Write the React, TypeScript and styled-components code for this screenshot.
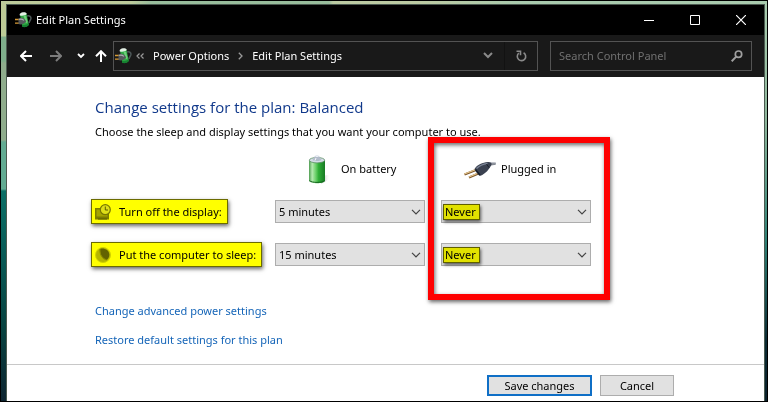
import React from 'react';
import styled, { createGlobalStyle, css } from 'styled-components';

const GlobalStyle = createGlobalStyle`
  *, *::before, *::after { box-sizing: border-box; }
  body { margin: 0; }
  body, button, input, select {
    font-family: "Noto Sans", "Open Sans", sans-serif;
    font-size: 11px;
    line-height: 16px;
  }
`;

const Desktop = styled.div`
  display: flex;
  min-height: 100vh;
  padding: 3px 2px 0 5px;
  border: 1px solid #000;
  background:
    linear-gradient(90deg, #bccb9b 0 130px, #98bd9c 150px 328px, #bccba3 332px 420px, #a9cbae 520px) top / 100% 3px no-repeat,
    linear-gradient(#bccb97 0 35px, #7fae8b 36px 60px, #8fac8c 62px 139px, #62ab92 141px 188px, #0b6f66 190px, #085a56 255px, #07413f 330px, #0d2431) left / 5px 100% no-repeat,
    linear-gradient(#a9cbae, #8db69b 30%, #2d7f74 60%, #0b2a33 85%, #0b222c) right / 2px 100% no-repeat;
`;

const Window = styled.div`
  flex: 1;
  min-width: 0;
  display: flex;
  flex-direction: column;
  border: solid #4b5a50;
  border-width: 1px 1px 0;
  background: #fff;
`;

const TitleBar = styled.header`
  display: flex;
  align-items: center;
  height: 30px;
  padding-left: 8px;
  gap: 4px;
  background: #000;
  color: #fff;
`;

const WindowTitle = styled.span`
  flex: 1;
`;

const Controls = styled.div`
  display: flex;
  align-self: stretch;
`;

const PlainButton = styled.button`
  display: flex;
  align-items: center;
  justify-content: center;
  padding: 0;
  border: 0;
  background: none;
  color: inherit;
`;

const ControlButton = styled(PlainButton)`
  width: 46px;
`;

const Toolbar = styled.nav`
  display: flex;
  align-items: center;
  height: 42px;
  padding: 0 12px 1px 4px;
  background: #191919;
  color: #fff;
`;

const NavButton = styled(PlainButton)<{ $narrow?: boolean }>`
  width: ${(p) => (p.$narrow ? '20px' : '30px')};
  height: 28px;
  color: ${(p) => (p.disabled ? '#7c7c7c' : '#fff')};
`;

const fieldBox = css`
  display: flex;
  align-items: center;
  height: 30px;
  border: 1px solid #535353;
`;

const AddressBar = styled.div`
  ${fieldBox}
  flex: 1;
  min-width: 0;
  margin: 0 12px 0 2px;
  padding-left: 1px;
`;

const Crumbs = styled.ol`
  flex: 1;
  display: flex;
  align-items: center;
  gap: 9px;
  margin: 0;
  padding: 0 0 0 4px;
  list-style: none;
  white-space: nowrap;
  color: #9a9a9a;
`;

const Crumb = styled.li`
  display: flex;
  align-items: center;
  gap: 9px;
`;

const CrumbLink = styled.a`
  color: #fff;
  text-decoration: none;
`;

const AddressButton = styled(PlainButton)`
  width: 33px;
  height: 28px;
  color: #8a8a8a;
  & + & { border-left: 1px solid #121212; }
`;

const SearchBox = styled.label`
  ${fieldBox}
  flex: 0 1 202px;
  min-width: 0;
  padding: 0 8px;
  color: #a0a0a0;
`;

const SearchInput = styled.input`
  flex: 1;
  min-width: 0;
  padding: 0;
  border: 0;
  outline: 0;
  background: none;
  color: #fff;
  &::placeholder { color: #707070; opacity: 1; }
`;

const Content = styled.main`
  flex: 1;
  padding: 20px 88px 16px;
  color: #000;
`;

const Heading = styled.h1`
  margin: 0 0 7px;
  font: 400 15px/20px "Open Sans", "Noto Sans", sans-serif;
  color: #11398b;
`;

const Intro = styled.p`
  margin: 0;
`;

const SettingsGrid = styled.form`
  display: grid;
  grid-template-columns: 180px 150px 150px;
  grid-auto-rows: 43px;
  align-items: center;
  margin: 7px 0 27px;
`;

const ColumnHead = styled.div`
  display: flex;
  align-items: center;
  gap: 5px;
  padding-left: 23px;
`;

const BatteryHead = styled(ColumnHead)`
  grid-column: 2;
`;

const PluggedGroup = styled.div`
  position: relative;
  grid-column: 3;
  grid-row: 1 / span 3;
  display: grid;
  grid-template-columns: 150px;
  grid-auto-rows: 43px;
  align-items: center;
  margin: 0 -16px 0 16px;
`;

const Callout = styled.div`
  position: absolute;
  inset: -10px -19px -24px -13px;
  border: 6px solid #fe0000;
  box-shadow: 1px 2px 4px rgba(0, 0, 0, 0.6), inset 1px 2px 4px rgba(0, 0, 0, 0.6);
  pointer-events: none;
`;

const SettingLabel = styled.label`
  grid-column: 1;
  justify-self: start;
  display: flex;
  align-items: center;
  gap: 8px;
  height: 25px;
  margin-left: -4px;
  padding: 0 5px 0 3px;
  border: 1px solid #6b6b00;
  background: #ff0;
  box-shadow: 1px 2px 4px rgba(0, 0, 0, 0.6);
  white-space: nowrap;
`;

const SelectWrap = styled.div`
  position: relative;
  display: flex;
  align-items: center;
`;

const Select = styled.select`
  width: 100%;
  height: 23px;
  padding: 0 20px 0 3px;
  border: 1px solid #adadad;
  border-radius: 0;
  background: #e1e1e1;
  color: #000;
  appearance: none;
`;

const SelectArrow = styled.svg`
  position: absolute;
  right: 4px;
  pointer-events: none;
`;

const Marker = styled.span`
  position: absolute;
  left: 2px;
  width: 37px;
  height: 16px;
  border: 1px solid #6b6b00;
  background: #ff0;
  box-shadow: 1px 2px 3px rgba(0, 0, 0, 0.6);
  mix-blend-mode: multiply;
  pointer-events: none;
`;

const Links = styled.div`
  display: flex;
  flex-direction: column;
  align-items: flex-start;
  gap: 13px;
`;

const TextLink = styled.a`
  color: #1565b8;
  text-decoration: none;
`;

const Footer = styled.footer`
  display: flex;
  justify-content: flex-end;
  gap: 8px;
  padding: 10px 90px 5px;
  border-top: 1px solid #c8c8c8;
`;

const ActionButton = styled.button<{ $primary?: boolean }>`
  width: ${(p) => (p.$primary ? '105px' : '74px')};
  height: 21px;
  padding: 0;
  border: ${(p) => (p.$primary ? '2px solid #0f6fc6' : '1px solid #adadad')};
  background: #e1e1e1;
  color: #000;
`;

const PowerIcon = () => (
  <svg width="17" height="16" viewBox="0 0 17 16" aria-hidden="true">
    <path d="M12 4c2.600-.8 4.300.6 3.800 2.900-.5 2-1.800 2.200-1.600 4.300" fill="none" stroke="#4c5657" strokeWidth="1.600" />
    <path d="M5 2.800 11.500 1.800 13.800 12.800c-1.400 2-4.800 2.800-6.600 1.800z" fill="#2fa944" />
    <path d="M8.600 4l2.400-.5 1.600 6.800-1.600 1z" fill="#6fce7a" />
    <path d="M4.600 3.200c-.3-1.700 1.600-2.600 3.400-2.900 2-.2 3.600.2 3.800 1.800-1.500 1.600-5.200 2.200-7.200 1.100z" fill="#e4f1e6" />
    <path d="M6.800 12.600c2 .7 4.900.2 6.700-1.100l.2 1.700c-1.400 2-5 2.500-6.400 1.500z" fill="#168231" />
    <path d="M0 7.500h4M0 11.200h4" stroke="#d79a35" strokeWidth="1.300" />
    <path d="M3.500 6.400c2.200-1 4.400-.6 6.500 1.300l1.200 1.700-1.700 1.600c-2.200 1.500-4.200 1.800-6 1.100z" fill="#55595c" />
    <path d="M4.200 7.500c1.700-.7 3.300-.3 4.700.9" fill="none" stroke="#aab0b3" strokeWidth="1.200" />
  </svg>
);

const ArrowLeft = () => (
  <svg width="12" height="12" viewBox="0 0 12 12" fill="none" stroke="currentColor" strokeWidth="2" aria-hidden="true">
    <path d="M12 6H1.5M6 1 1 6l5 5" />
  </svg>
);
const ArrowRight = () => (
  <svg width="12" height="12" viewBox="0 0 12 12" fill="none" stroke="currentColor" strokeWidth="2" aria-hidden="true">
    <path d="M0 6h10.5M6 1l5 5-5 5" />
  </svg>
);
const ArrowUp = () => (
  <svg width="12" height="12" viewBox="0 0 12 12" fill="none" stroke="currentColor" strokeWidth="2" aria-hidden="true">
    <path d="M6 12V1.5M1 6.200 6 1.200l5 5" />
  </svg>
);
const SmallChevron = () => (
  <svg width="8" height="6" viewBox="0 0 8 6" fill="none" stroke="currentColor" strokeWidth="1.800" aria-hidden="true">
    <path d="M1 1l3 3 3-3" />
  </svg>
);
const WideChevron = () => (
  <svg width="10" height="7" viewBox="0 0 10 7" fill="none" stroke="currentColor" strokeWidth="2" aria-hidden="true">
    <path d="M1 1l4 4 4-4" />
  </svg>
);
const CrumbBack = () => (
  <svg width="8" height="6" viewBox="0 0 8 6" fill="none" stroke="currentColor" strokeWidth="1.200" aria-hidden="true">
    <path d="M3.500 .5 1 3l2.500 2.500M7.500 .5 5 3l2.500 2.500" />
  </svg>
);
const CrumbNext = () => (
  <svg width="5" height="8" viewBox="0 0 5 8" fill="none" stroke="currentColor" strokeWidth="1.300" aria-hidden="true">
    <path d="M.8 .8 4 4 .8 7.200" />
  </svg>
);
const RefreshIcon = () => (
  <svg width="11" height="12" viewBox="0 0 11 12" fill="none" stroke="currentColor" strokeWidth="1.600" aria-hidden="true">
    <path d="M7.600 2.800a4.200 4.200 0 1 1-4.800 .4" />
    <path d="M.5 1.300h4v4" />
  </svg>
);
const SearchIcon = () => (
  <svg width="12" height="12" viewBox="0 0 12 12" fill="none" stroke="currentColor" aria-hidden="true">
    <circle cx="7.500" cy="4.200" r="3.200" strokeWidth="1.700" />
    <path d="M5.200 6.600 .7 11.200" strokeWidth="2" />
  </svg>
);

const BatteryIcon = () => (
  <svg width="38" height="32" viewBox="0 0 38 32" aria-hidden="true">
    <defs>
      <linearGradient id="cell" x1="0" x2="1">
        <stop offset="0" stopColor="#4f9d51" />
        <stop offset=".2" stopColor="#b5eab0" />
        <stop offset=".42" stopColor="#6cd16a" />
        <stop offset=".6" stopColor="#2fae37" />
        <stop offset="1" stopColor="#187a24" />
      </linearGradient>
      <linearGradient id="shade" x1="0" x2="1">
        <stop offset="0" stopColor="#777" />
        <stop offset="1" stopColor="#fff" stopOpacity="0" />
      </linearGradient>
    </defs>
    <path d="M26 23c4-2 7-1 6 1s-4 5-9 6.500z" fill="url(#shade)" opacity=".7" />
    <path d="M11 7.500v20.600c1.500 3 14.500 3 16 0V7.500z" fill="url(#cell)" />
    <path d="M11.500 27.600c2 2.400 13 2.400 15 0" fill="none" stroke="#16641f" />
    <ellipse cx="19" cy="7.200" rx="7.700" ry="2.700" fill="#d5dde6" stroke="#5e8f68" strokeWidth=".8" />
    <path d="M14.500 7c1.500-1 1.500-3 2.500-4 1-.8 3-.8 4 0 1 1 1 3 2.500 4-2 1.400-7 1.400-9 0z" fill="#b3bccb" />
    <path d="M17 3.200c1-.9 3-.9 4 0-.6 1-3.400 1-4 0z" fill="#edf1f6" />
    <path d="M18 5l-1 2.500" stroke="#f7f9fb" />
  </svg>
);

const PlugIcon = () => (
  <svg width="32" height="32" viewBox="0 0 32 32" aria-hidden="true">
    <path d="M22 11.500c3-1.800 6-2.200 10-1.800l-.5 2.300c-3-.4-5 .6-7 2z" fill="#858a94" />
    <path d="M23 11c3-1.300 5-1.500 8.500-1.200" fill="none" stroke="#c0c3ca" strokeWidth=".8" />
    <path d="M.5 21.500 12 17M5 24.500 15 20.300" stroke="#7b5528" strokeWidth="2.200" />
    <path d="M.5 21 12 16.500M5 24 15 19.800" stroke="#e8c890" strokeWidth="1.100" />
    <path d="M10.500 16c2.500-4.200 8.500-6.400 13-6.900 3-.3 4.500 .8 4 2.700-2 4.200-6 9.200-11 11-1.800 .2-4.500-3.500-6-6.800z" fill="#3a4150" />
    <path d="M12.500 15.600c3-3 6.500-4.400 11-5.200" fill="none" stroke="#7d8698" strokeWidth="1.400" />
    <path d="M11.500 16.500l4.500 5.500" stroke="#171b24" strokeWidth="1.300" />
    <path d="M22.500 11l2.500 3.500" stroke="#1c212b" />
  </svg>
);

const DisplayIcon = () => (
  <svg width="16" height="16" viewBox="0 0 16 16" aria-hidden="true">
    <path d="M0 4h14v11.500H0z" fill="#7d7d00" />
    <path d="M1.500 5.500h11v7h-11z" fill="#a4a400" />
    <path d="M3 15h9" stroke="#5c5c00" />
    <circle cx="10.300" cy="5.700" r="5" fill="#dede18" stroke="#777700" strokeWidth="1.200" />
    <path d="M10.300 2.500v3.500h2.700" fill="none" stroke="#5c5c00" />
  </svg>
);

const SleepIcon = () => (
  <svg width="16" height="16" viewBox="0 0 16 16" aria-hidden="true">
    <circle cx="8" cy="8" r="7.500" fill="#b5b500" stroke="#d2d200" />
    <path d="M5 2c4-1.500 9 1 9.300 5.500 .1 2.500-1 4.500-2.800 5.500C7 11.500 4.500 7 5 2z" fill="#626200" />
    <path d="M5 2c-.5 5 2 9.500 6.500 11" fill="none" stroke="#8c8c00" strokeWidth="1.200" />
  </svg>
);

type ChoiceProps = { id?: string; label: string; value: string; marked?: boolean };

const Choice = ({ id, label, value, marked }: ChoiceProps) => (
  <SelectWrap>
    <Select id={id} aria-label={label} defaultValue={value}>
      <option>5 minutes</option>
      <option>15 minutes</option>
      <option>Never</option>
    </Select>
    {marked && <Marker />}
    <SelectArrow width="10" height="6" viewBox="0 0 10 6" fill="none" stroke="#444" strokeWidth="1.200" aria-hidden="true">
      <path d="M1 .8l4 4 4-4" />
    </SelectArrow>
  </SelectWrap>
);

export default function App() {
  return (
    <>
      <GlobalStyle />
      <Desktop>
        <Window>
          <TitleBar>
            <PowerIcon />
            <WindowTitle>Edit Plan Settings</WindowTitle>
            <Controls>
              <ControlButton aria-label="Minimize">
                <svg width="10" height="10" viewBox="0 0 10 10" stroke="#fff"><path d="M0 5.500h10" /></svg>
              </ControlButton>
              <ControlButton aria-label="Maximize">
                <svg width="10" height="10" viewBox="0 0 10 10" fill="none" stroke="#fff"><path d="M.5 .5h9v9h-9z" /></svg>
              </ControlButton>
              <ControlButton aria-label="Close">
                <svg width="10" height="10" viewBox="0 0 10 10" stroke="#fff" strokeWidth="1.200"><path d="M0 0l10 10M10 0 0 10" /></svg>
              </ControlButton>
            </Controls>
          </TitleBar>

          <Toolbar aria-label="Navigation">
            <NavButton aria-label="Back"><ArrowLeft /></NavButton>
            <NavButton aria-label="Forward" disabled><ArrowRight /></NavButton>
            <NavButton $narrow aria-label="Recent locations"><SmallChevron /></NavButton>
            <NavButton $narrow aria-label="Up"><ArrowUp /></NavButton>
            <AddressBar>
              <PowerIcon />
              <Crumbs>
                <Crumb><CrumbBack /></Crumb>
                <Crumb><CrumbLink href="#power">Power Options</CrumbLink><CrumbNext /></Crumb>
                <Crumb><CrumbLink href="#plan">Edit Plan Settings</CrumbLink></Crumb>
              </Crumbs>
              <AddressButton aria-label="Previous locations"><WideChevron /></AddressButton>
              <AddressButton aria-label="Refresh"><RefreshIcon /></AddressButton>
            </AddressBar>
            <SearchBox>
              <SearchInput type="search" placeholder="Search Control Panel" aria-label="Search Control Panel" />
              <SearchIcon />
            </SearchBox>
          </Toolbar>

          <Content>
            <Heading>Change settings for the plan: Balanced</Heading>
            <Intro>Choose the sleep and display settings that you want your computer to use.</Intro>
            <SettingsGrid>
              <BatteryHead><BatteryIcon />On battery</BatteryHead>
              <SettingLabel htmlFor="display"><DisplayIcon />Turn off the display:</SettingLabel>
              <Choice id="display" label="Turn off the display, on battery" value="5 minutes" />
              <SettingLabel htmlFor="sleep"><SleepIcon />Put the computer to sleep:</SettingLabel>
              <Choice id="sleep" label="Put the computer to sleep, on battery" value="15 minutes" />
              <PluggedGroup>
                <ColumnHead><PlugIcon />Plugged in</ColumnHead>
                <Choice label="Turn off the display, plugged in" value="Never" marked />
                <Choice label="Put the computer to sleep, plugged in" value="Never" marked />
                <Callout />
              </PluggedGroup>
            </SettingsGrid>
            <Links>
              <TextLink href="#advanced">Change advanced power settings</TextLink>
              <TextLink href="#restore">Restore default settings for this plan</TextLink>
            </Links>
          </Content>

          <Footer>
            <ActionButton $primary>Save changes</ActionButton>
            <ActionButton>Cancel</ActionButton>
          </Footer>
        </Window>
      </Desktop>
    </>
  );
}
